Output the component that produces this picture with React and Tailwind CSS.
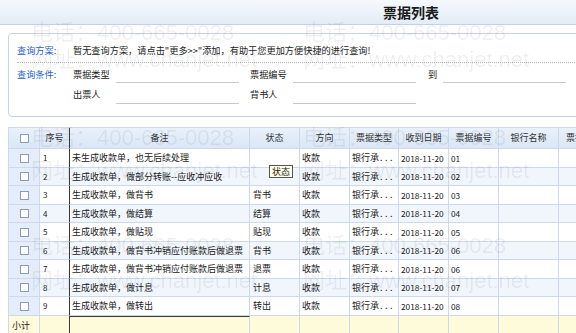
import React from 'react';

const rows = [
    { n: 1, memo: '未生成收款单，也无后续处理', st: '', no: '01' },
    { n: 2, memo: '生成收款单，做部分转账--应收冲应收', st: '', no: '02' },
    { n: 3, memo: '生成收款单，做背书', st: '背书', no: '03' },
    { n: 4, memo: '生成收款单，做结算', st: '结算', no: '04' },
    { n: 5, memo: '生成收款单，做贴现', st: '贴现', no: '05' },
    { n: 6, memo: '生成收款单，做背书冲销应付账款后做退票', st: '背书', no: '06' },
    { n: 7, memo: '生成收款单，做背书冲销应付账款后做退票', st: '退票', no: '06' },
    { n: 8, memo: '生成收款单，做计息', st: '计息', no: '07' },
    { n: 9, memo: '生成收款单，做转出', st: '转出', no: '08' },
];

const headers = ['序号', '备注', '状态', '方向', '票据类型', '收到日期', '票据编号', '银行名称'];

const cols = 'grid grid-cols-[31px_30px_180px_50px_50px_49px_50px_50px_60px_60px]';
const cell = 'border-r border-b border-[#cdd8ea] flex items-center overflow-hidden whitespace-nowrap';

function Box() {
    return <span className="block w-[9px] h-[9px] border border-[#8a9cb8] bg-white" />;
}

function Field() {
    return <div className="w-[123px] h-[17px] border-b border-[#c9c9c9]" />;
}

const marks = [
    { x: 'left-[31px]', y: 'top-[20px]', t: 'phone' },
    { x: 'left-[303px]', y: 'top-[20px]', t: 'phone' },
    { x: 'left-[575px]', y: 'top-[20px]', t: 'phone' },
    { x: 'left-[31px]', y: 'top-[47px]', t: 'web' },
    { x: 'left-[303px]', y: 'top-[47px]', t: 'web' },
    { x: 'left-[575px]', y: 'top-[47px]', t: 'web' },
    { x: 'left-[31px]', y: 'top-[125px]', t: 'phone' },
    { x: 'left-[303px]', y: 'top-[125px]', t: 'phone' },
    { x: 'left-[31px]', y: 'top-[158px]', t: 'web' },
    { x: 'left-[303px]', y: 'top-[158px]', t: 'web' },
    { x: 'left-[31px]', y: 'top-[233px]', t: 'phone' },
    { x: 'left-[303px]', y: 'top-[233px]', t: 'phone' },
    { x: 'left-[31px]', y: 'top-[268px]', t: 'web' },
    { x: 'left-[303px]', y: 'top-[268px]', t: 'web' },
];

export default function App() {
    return (
        <div className="relative w-[576px] h-[333px] overflow-hidden bg-white text-[#222] font-['Noto_Sans_CJK_SC',sans-serif]">
            {/* title bar */}
            <div className="h-[25px] bg-gradient-to-b from-[#f6f9fd] to-[#e3ecf7] border-b border-[#c3d1e4] pl-[383px] flex items-center">
                <span className="text-[14px] font-bold leading-none text-[#1a1a1a]">票据列表</span>
            </div>

            {/* query panel */}
            <div className="ml-[8px] mt-[8px] w-[640px] h-[84px] border border-[#c6d2e4] rounded-[4px] px-[8px]">
                <div className="h-[29px] pt-[6px] flex items-center border-b border-dotted border-[#b5b5b5] text-[9.2px]">
                    <span className="w-[56px] text-[#1f5fcf]">查询方案:</span>
                    <span>暂无查询方案，请点击"更多&gt;&gt;"添加，有助于您更加方便快捷的进行查询!</span>
                </div>
                <div className="h-[21px] mt-[1px] flex items-center text-[9.2px]">
                    <span className="w-[56px] text-[#1f5fcf]">查询条件:</span>
                    <span className="w-[43px]">票据类型</span>
                    <Field />
                    <span className="w-[43px] ml-[11px]">票据编号</span>
                    <Field />
                    <span className="w-[15px] ml-[12px]">到</span>
                    <Field />
                </div>
                <div className="h-[20px] flex items-center text-[9.2px]">
                    <span className="w-[56px]" />
                    <span className="w-[43px]">出票人</span>
                    <Field />
                    <span className="w-[43px] ml-[11px]">背书人</span>
                    <Field />
                </div>
            </div>

            {/* grid */}
            <div className="ml-[8px] mt-[10px] w-[620px] border-l border-t border-[#cdd8ea] text-[9px]">
                <div className={`${cols} h-[21px] bg-gradient-to-b from-[#e9f1fb] to-[#d9e6f6] text-[#333]`}>
                    <div className={`${cell} justify-center`}><Box /></div>
                    {headers.map((h, i) => (
                        <div
                            key={h}
                            className={`${cell} justify-center ${i === 0 ? 'border-r-[#3a3a3a]' : ''}`}
                        >
                            {h}
                        </div>
                    ))}
                    <div className={`${cell} pl-[7px]`}>票据状态</div>
                </div>
                {rows.map((r, i) => (
                    <div
                        key={r.n}
                        className={`${cols} ${i % 2 === 0 ? 'h-[19px] bg-white' : 'h-[18px] bg-[#f1f6fd]'}`}
                    >
                        <div className={`${cell} justify-center bg-[#e4edf9]`}><Box /></div>
                        <div className={`${cell} pl-[3px] border-r-[#3a3a3a] text-[8px]`}>{r.n}</div>
                        <div className={`${cell} pl-[2px]`}>{r.memo}</div>
                        <div className={`${cell} pl-[3px]`}>{r.st}</div>
                        <div className={`${cell} pl-[2px]`}>收款</div>
                        <div className={`${cell} pl-[2px]`}>
                            银行承<span className="tracking-[2.5px] ml-[1px]">...</span>
                        </div>
                        <div className={`${cell} pl-[2px] text-[8.3px]`}>2018-11-20</div>
                        <div className={`${cell} pl-[2px] text-[8.3px]`}>{r.no}</div>
                        <div className={cell} />
                        <div className={cell} />
                    </div>
                ))}
                <div className={`${cols} h-[20px] bg-[#fdfbd9]`}>
                    <div className={`${cell} pl-[3px]`}>小计</div>
                    <div className={`${cell} border-r-[#3a3a3a]`} />
                    <div className={`${cell} border-t border-t-[#3a3a3a]`} />
                    <div className={cell} />
                    <div className={cell} />
                    <div className={cell} />
                    <div className={cell} />
                    <div className={cell} />
                    <div className={cell} />
                    <div className={cell} />
                </div>
            </div>

            {/* tooltip over status cell */}
            <div className="absolute left-[269px] top-[165px] h-[13px] px-[2px] flex items-center bg-[#ffffe6] border border-[#555] text-[9px] leading-none">
                状态
            </div>

            {/* watermark */}
            {marks.map((m, i) => (
                <div
                    key={i}
                    className={`absolute ${m.x} ${m.y} pointer-events-none whitespace-nowrap text-[22px] leading-[26px] text-black/[0.07] font-['Liberation_Sans','Noto_Sans_CJK_SC',sans-serif]`}
                >
                    {m.t === 'phone' ? '电话：400-665-0028' : '网址：www.chanjet.net'}
                </div>
            ))}
        </div>
    );
}
